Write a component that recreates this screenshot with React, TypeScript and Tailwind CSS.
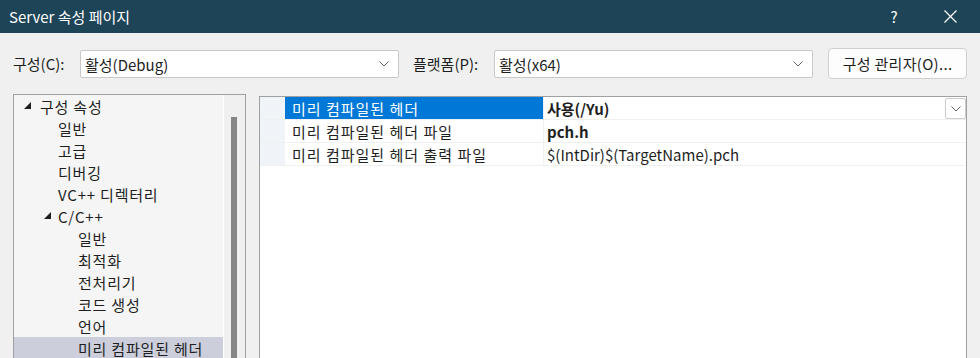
import React from 'react';

const FONT = "font-['Segoe_UI','Noto_Sans_CJK_KR',sans-serif]";

type TreeItem = { label: string; level: number; open?: boolean; selected?: boolean };

const treeItems: TreeItem[] = [
  { label: '구성 속성', level: 0, open: true },
  { label: '일반', level: 1 },
  { label: '고급', level: 1 },
  { label: '디버깅', level: 1 },
  { label: 'VC++ 디렉터리', level: 1 },
  { label: 'C/C++', level: 1, open: true },
  { label: '일반', level: 2 },
  { label: '최적화', level: 2 },
  { label: '전처리기', level: 2 },
  { label: '코드 생성', level: 2 },
  { label: '언어', level: 2 },
  { label: '미리 컴파일된 헤더', level: 2, selected: true },
];

type PropRow = { name: string; value: string; bold?: boolean; active?: boolean };

const propRows: PropRow[] = [
  { name: '미리 컴파일된 헤더', value: '사용(/Yu)', bold: true, active: true },
  { name: '미리 컴파일된 헤더 파일', value: 'pch.h', bold: true },
  { name: '미리 컴파일된 헤더 출력 파일', value: '$(IntDir)$(TargetName).pch' },
];

const Chevron = () => (
  <svg width="10" height="6" viewBox="0 0 10 6" className="shrink-0">
    <polyline points="0.5,0.5 5,5 9.5,0.5" fill="none" stroke="#606060" strokeWidth="1" />
  </svg>
);

const Expander = () => (
  <svg width="8" height="8" viewBox="0 0 8 8" className="shrink-0">
    <polygon points="8,0 8,7 1,7" fill="#1e1e1e" />
  </svg>
);

const ComboBox: React.FC<{ value: string; className?: string }> = ({ value, className }) => (
  <div
    className={`h-[28px] flex items-center justify-between bg-white border border-[#c8c8c8] rounded-[2px] pl-[4px] pr-[9px] ${className ?? ''}`}
  >
    <span className="text-[15px] leading-none text-[#1e1e1e]">{value}</span>
    <Chevron />
  </div>
);

const App: React.FC = () => {
  return (
    <div className={`w-[980px] h-[358px] overflow-hidden bg-[#f0f0f0] ${FONT}`}>
      {/* title bar */}
      <div className="h-[33px] bg-[#1e4458] flex items-center text-white">
        <span className="pl-[9px] text-[15px] leading-none flex-1">Server 속성 페이지</span>
        <span className="text-[15px] leading-none w-[20px] text-center mr-[40px]">?</span>
        <svg width="13" height="13" viewBox="0 0 13 13" className="mr-[23px]">
          <line x1="0.5" y1="0.5" x2="12.5" y2="12.5" stroke="white" strokeWidth="1.2" />
          <line x1="12.5" y1="0.5" x2="0.5" y2="12.5" stroke="white" strokeWidth="1.2" />
        </svg>
      </div>

      {/* configuration row */}
      <div className="h-[31px] mt-[15px] flex items-center pl-[13px] text-[#1e1e1e]">
        <span className="text-[15px] leading-none w-[67px]">구성(C):</span>
        <ComboBox value="활성(Debug)" className="w-[319px] mt-[1px]" />
        <span className="text-[15px] leading-none ml-[14px] w-[81px]">플랫폼(P):</span>
        <ComboBox value="활성(x64)" className="w-[319px] mt-[1px]" />
        <button className="ml-[15px] w-[139px] h-[31px] bg-[#fdfdfd] border border-[#d0d0d0] rounded-[4px] text-[15px] leading-none tracking-[0.3px] text-[#1e1e1e]">
          구성 관리자(O)...
        </button>
      </div>

      {/* main area */}
      <div className="mt-[15px] flex items-start pl-[13px]">
        {/* tree */}
        <div className="w-[233px] h-[280px] border-l border-t border-r border-[#a0a0a0] bg-[#f5f5f5] flex">
          <div className="w-[209px] flex flex-col">
            {treeItems.map((item, i) => (
              <div
                key={i}
                className={`h-[22px] shrink-0 flex items-center text-[15px] leading-none tracking-[0.8px] text-[#1e1e1e] ${
                  item.selected ? 'bg-[#cccedb]' : ''
                }`}
              >
                {item.level === 0 && (
                  <div className="flex items-center">
                    <span className="ml-[9px] mr-[9px] mt-[-1px]"><Expander /></span>
                    <span>{item.label}</span>
                  </div>
                )}
                {item.level === 1 && item.open && (
                  <div className="flex items-center">
                    <span className="ml-[29px] mr-[7px] mt-[-1px]"><Expander /></span>
                    <span>{item.label}</span>
                  </div>
                )}
                {item.level === 1 && !item.open && <span className="pl-[44px]">{item.label}</span>}
                {item.level === 2 && <span className="pl-[64px]">{item.label}</span>}
              </div>
            ))}
          </div>
          <div className="w-[1px] bg-white" />
          <div className="flex-1 bg-[#f0f0f0] pl-[7px] pt-[22px]">
            <div className="w-[6px] h-[260px] bg-[#868686]" />
          </div>
        </div>

        {/* property grid */}
        <div className="ml-[13px] mt-[2px] w-[708px] h-[280px] border-l border-t border-r border-[#a0a0a0] bg-white">
          {propRows.map((row, i) => (
            <div key={i} className="h-[23px] flex border-b border-[#f0f0f0]">
              <div className="w-[25px] bg-[#f0f4f9]" />
              <div
                className={`w-[258px] flex items-center pl-[7px] text-[15px] leading-none tracking-[1px] ${
                  row.active ? 'bg-[#0078d7] text-white' : 'text-[#1e1e1e]'
                }`}
              >
                {row.name}
              </div>
              <div className="w-[1px] bg-[#f0f0f0]" />
              <div className="flex-1 flex items-center justify-between pl-[3px]">
                <span className={`text-[15px] leading-none text-[#1e1e1e] ${row.bold ? 'font-bold' : ''}`}>
                  {row.value}
                </span>
                {row.active && (
                  <div className="w-[21px] h-[21px] mt-[1px] border border-[#cccccc] rounded-[2px] bg-white flex items-center justify-center">
                    <Chevron />
                  </div>
                )}
              </div>
            </div>
          ))}
        </div>
      </div>
    </div>
  );
};

export default App;
